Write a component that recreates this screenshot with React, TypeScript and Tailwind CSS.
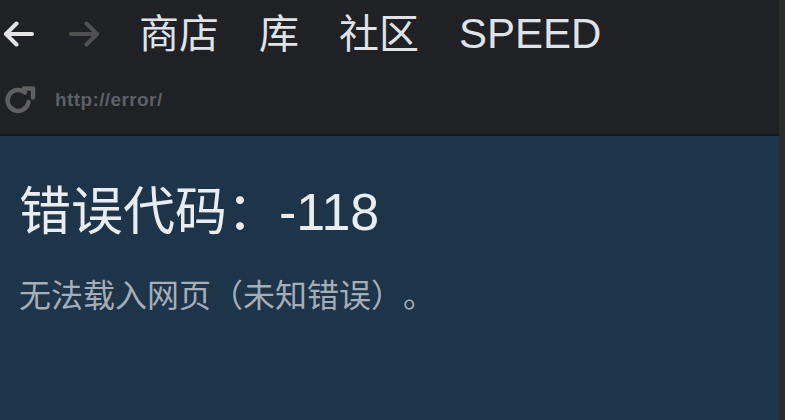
const font = { fontFamily: '"Liberation Sans", "Noto Sans CJK SC", sans-serif' };

const navItems = ["商店", "库", "社区"];

function ArrowIcon({ dir, color }: { dir: "left" | "right"; color: string }) {
  return (
    <svg width="31" height="26" viewBox="0 0 31 26" fill="none">
      <g transform={dir === "right" ? "translate(31 0) scale(-1 1)" : undefined}>
        <path d="M3 13H29" stroke={color} strokeWidth="4" strokeLinecap="round" />
        <path d="M13.5 2.5L3 13L13.5 23.5" stroke={color} strokeWidth="4" strokeLinecap="round" strokeLinejoin="round" />
      </g>
    </svg>
  );
}

function RefreshIcon() {
  return (
    <svg width="34" height="30" viewBox="0 0 34 30" fill="none">
      <path
        d="M22 7.5A10.5 10.5 0 1 0 25.5 17"
        stroke="#5f5f60"
        strokeWidth="4.5"
        strokeLinecap="round"
      />
      <path
        d="M21 3.5H30V12.5"
        stroke="#5f5f60"
        strokeWidth="4.5"
        strokeLinecap="round"
        strokeLinejoin="round"
      />
    </svg>
  );
}

export default function App() {
  return (
    <div className="flex w-[785px] h-[420px] overflow-hidden bg-[#1e3449]" style={font}>
      <div className="flex-1 flex flex-col">
        {/* Browser bar */}
        <div className="h-[136px] shrink-0 bg-[#202124] border-b-2 border-[#16181c] flex flex-col">
          <div className="h-[68px] flex items-center pl-[3px]">
            <ArrowIcon dir="left" color="#e4e4e4" />
            <div className="ml-[35px]">
              <ArrowIcon dir="right" color="#515151" />
            </div>
            <nav className="ml-[39px] flex items-center gap-[40px] text-[40px] leading-none text-[#dfe3e8]">
              {navItems.map((item) => (
                <span key={item}>{item}</span>
              ))}
              <span className="text-[42px]">SPEED</span>
            </nav>
          </div>
          <div className="h-[64px] flex items-center pl-[3px]">
            <RefreshIcon />
            <span className="ml-[18px] text-[19px] font-bold tracking-[0.4px] text-[#5c6068]">
              http://error/
            </span>
          </div>
        </div>

        {/* Error message */}
        <div className="pl-[19px] pt-[50px]">
          <h1 className="text-[52px] leading-none text-[#e9edf0]">错误代码：-118</h1>
          <p className="mt-[42px] text-[32px] leading-none text-[#a4aeb8] [text-spacing-trim:space-all]">
            无法载入网页（未知错误）。
          </p>
        </div>
      </div>
      <div className="w-[6px] shrink-0 bg-[#2b2b2c]" />
    </div>
  );
}
